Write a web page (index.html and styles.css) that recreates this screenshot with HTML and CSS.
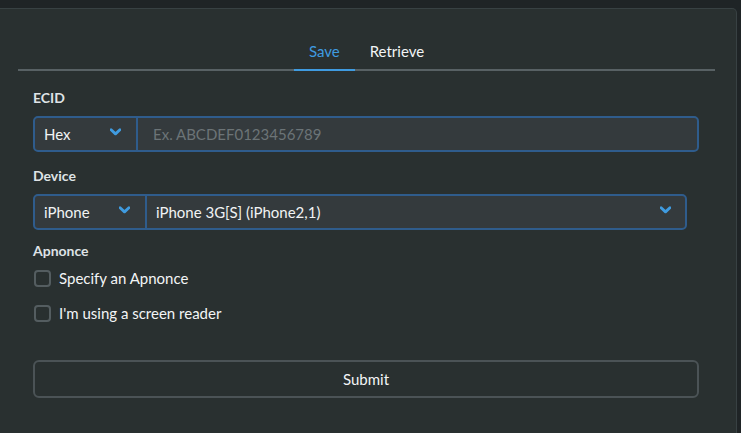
FILE: index.html
```html
<!DOCTYPE html>
<html lang="en">
<head>
    <meta charset="UTF-8">
    <meta name="viewport" content="width=device-width, initial-scale=1.0">
    <title>Blob Saver</title>
    <link rel="stylesheet" href="styles.css">
</head>
<body>
    <div class="card">
        <nav class="tabs">
            <a href="#" class="tab active">Save</a>
            <a href="#" class="tab">Retrieve</a>
        </nav>

        <form class="form" onsubmit="return false">
            <div class="group">
                <label class="label">ECID</label>
                <div class="input-group">
                    <div class="select select-hex">
                        <span>Hex</span>
                        <svg class="chevron" viewBox="0 0 10 7"><polyline points="1,1.5 5,5.2 9,1.5"/></svg>
                    </div>
                    <input class="text-input" type="text" placeholder="Ex. ABCDEF0123456789">
                </div>
            </div>

            <div class="group">
                <label class="label">Device</label>
                <div class="input-group device-group">
                    <div class="select select-type">
                        <span>iPhone</span>
                        <svg class="chevron" viewBox="0 0 10 7"><polyline points="1,1.5 5,5.2 9,1.5"/></svg>
                    </div>
                    <div class="select select-model">
                        <span>iPhone 3G[S] (iPhone2,1)</span>
                        <svg class="chevron" viewBox="0 0 10 7"><polyline points="1,1.5 5,5.2 9,1.5"/></svg>
                    </div>
                </div>
            </div>

            <div class="group apnonce">
                <label class="label">Apnonce</label>
                <label class="check"><span class="box"></span>Specify an Apnonce</label>
                <label class="check"><span class="box"></span>I'm using a screen reader</label>
            </div>

            <button class="submit-btn" type="submit">Submit</button>
        </form>
    </div>
</body>
</html>
```

FILE: styles.css
```css
* { margin: 0; padding: 0; box-sizing: border-box; }

body {
    font-family: 'Lato', 'Noto Sans', sans-serif;
    background: #1f2426;
    color: #e9ecee;
    height: 100vh;
    overflow: hidden;
}

.card {
    margin-top: 8px;
    width: 737px;
    height: 440px;
    background: #293030;
    border: 1px solid #384143;
    border-left: none;
    border-radius: 0 5px 0 0;
    padding: 29px 21px 0 18px;
}

.tabs {
    display: flex;
    justify-content: center;
    border-bottom: 2px solid #586164;
}

.tab {
    display: block;
    padding: 3px 15px 8px;
    margin-bottom: -2px;
    border-bottom: 2px solid transparent;
    font-size: 15px;
    line-height: 20px;
    color: #f3f5f6;
    text-decoration: none;
}

.tab.active {
    color: #3f9be0;
    border-bottom-color: #3f9be0;
}

.form {
    padding: 17px 16px 0 15px;
}

.group { margin-bottom: 14px; }

.label {
    display: block;
    font-size: 14px;
    font-weight: 700;
    line-height: 20px;
    color: #dfe3e6;
    margin-bottom: 8px;
}

.input-group {
    display: flex;
    height: 36px;
    border: 2px solid #2f5c8c;
    border-radius: 5px;
    background: #343a3d;
    overflow: hidden;
}

.device-group { margin-right: 12px; }

.select {
    display: flex;
    align-items: center;
    justify-content: space-between;
    font-size: 15px;
    color: #f1f3f4;
    padding: 0 15px 1px 9px;
}

.select-hex { width: 103px; border-right: 2px solid #2f5c8c; }
.select-type { width: 112px; border-right: 2px solid #2f5c8c; }
.select-model { flex: 1; padding-left: 9px; padding-right: 14px; }

.chevron {
    width: 11px;
    height: 8px;
    margin-top: -3px;
    fill: none;
    stroke: #3f9be0;
    stroke-width: 2.6;
    stroke-linecap: round;
    stroke-linejoin: round;
}

.text-input {
    flex: 1;
    border: none;
    outline: none;
    background: transparent;
    font-family: inherit;
    font-size: 15px;
    color: #f1f3f4;
    padding: 0 15px 1px;
}

.text-input::placeholder { color: #6c7477; }

.apnonce { margin-top: -3px; margin-bottom: 0; }
.apnonce .label { margin-bottom: 7px; }

.check {
    display: flex;
    align-items: center;
    gap: 8px;
    height: 20px;
    font-size: 15px;
    line-height: 20px;
    color: #f3f5f6;
    margin-bottom: 15px;
    cursor: pointer;
}

.box {
    width: 17px;
    height: 17px;
    border: 2px solid #545d60;
    border-radius: 4px;
    margin-left: 1px;
}

.submit-btn {
    display: block;
    width: 100%;
    height: 38px;
    margin-top: 37px;
    background: transparent;
    border: 2px solid #4b5356;
    border-radius: 6px;
    font-family: inherit;
    font-size: 15px;
    color: #f3f5f6;
    cursor: pointer;
}
```
